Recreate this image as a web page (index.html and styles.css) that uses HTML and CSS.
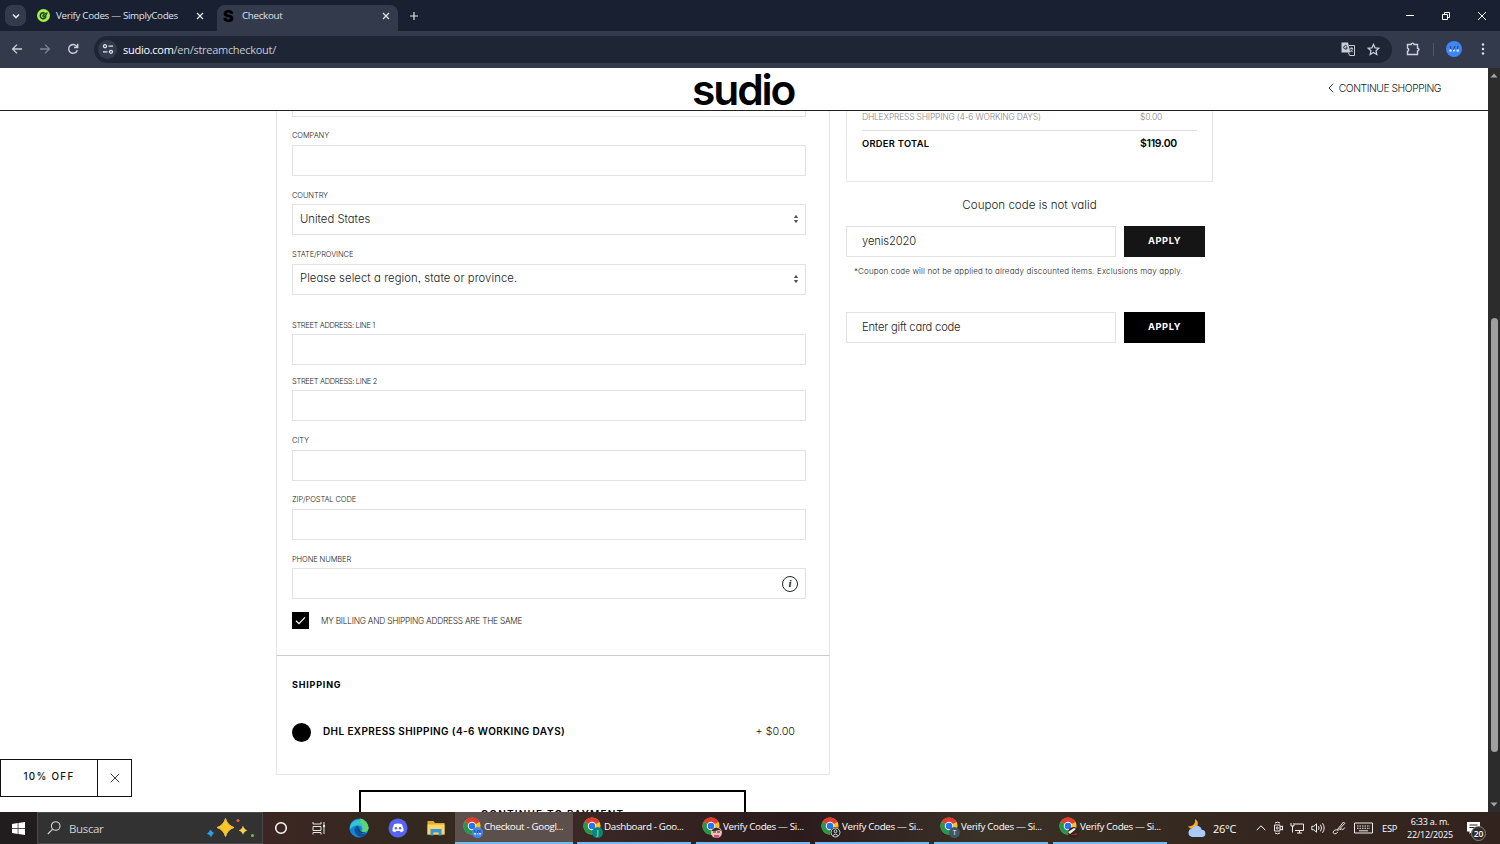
FILE: index.html
```html
<!DOCTYPE html>
<html lang="en">
<head>
<meta charset="UTF-8">
<meta name="viewport" content="width=device-width, initial-scale=1.0">
<title>Checkout</title>
<link rel="stylesheet" href="styles.css">
</head>
<body>

<!-- shared icons -->
<svg class="defs" width="0" height="0">
  <symbol id="x" viewBox="0 0 10 10"><path d="M2 2l6 6M8 2l-6 6" fill="none" stroke="currentColor" stroke-width="1.3"/></symbol>
  <symbol id="chrome" viewBox="0 0 20 20">
    <circle cx="10" cy="10" r="9.5" fill="#fbc116"/>
    <path d="M10 10L1.8 5.2A9.5 9.5 0 0 1 18.2 5.2z" fill="#e33b2e"/>
    <path d="M10 5.2h8.2L10 10z" fill="#e33b2e"/>
    <path d="M10 10L1.8 5.2A9.5 9.5 0 0 0 10 19.5l4.1-7z" fill="#27964a"/>
    <circle cx="10" cy="10" r="4.7" fill="#fff"/>
    <circle cx="10" cy="10" r="3.7" fill="#2b73e8"/>
  </symbol>
</svg>

<div class="tabs">
  <div class="tab-search"><svg width="10" height="10" viewBox="0 0 10 10"><path d="M2 3.5l3 3 3-3" fill="none" stroke="#dfe3ea" stroke-width="1.6"/></svg></div>
  <div class="tab">
    <svg width="13" height="13" viewBox="0 0 14 14"><circle cx="7" cy="7" r="7" fill="#a5f04c"/><path d="M8 4.300A3.200 3.200 0 1 0 9.800 8" fill="none" stroke="#1b3b22" stroke-width="1.600"/><path d="M5.500 7.500Q7 4 11.500 3.500 11 7.500 7 9.500z" fill="#1b3b22"/><path d="M6.800 8l3-3" stroke="#a5f04c" stroke-width=".7"/></svg>
    <span>Verify Codes — SimplyCodes</span>
    <svg class="close" width="10" height="10"><use href="#x"/></svg>
  </div>
  <div class="tab active">
    <b class="s-icon">S</b>
    <span>Checkout</span>
    <svg class="close" width="10" height="10"><use href="#x"/></svg>
  </div>
  <svg class="new-tab" width="10" height="10" viewBox="0 0 10 10"><path d="M5 1v8M1 5h8" stroke="#dfe3ea" stroke-width="1.2"/></svg>
  <div class="win-buttons">
    <svg width="10" height="10" viewBox="0 0 10 10"><path d="M1 4.500h8" stroke="#fff"/></svg>
    <svg width="10" height="10" viewBox="0 0 10 10" fill="none" stroke="#fff"><path d="M1.5 3.5h5v5h-5zM3.5 3.2V1.5h5v5H6.8"/></svg>
    <svg width="10" height="10" viewBox="0 0 10 10"><path d="M1 1l8 8M9 1L1 9" stroke="#fff"/></svg>
  </div>
</div>

<div class="toolbar">
  <svg width="12" height="12" viewBox="0 0 12 12" fill="none" stroke="#cdd2dc" stroke-width="1.3"><path d="M11 6H1.8M6 1.6L1.6 6 6 10.4"/></svg>
  <svg width="12" height="12" viewBox="0 0 12 12" fill="none" stroke="#7c8493" stroke-width="1.3"><path d="M1 6h9.2M6 1.6L10.4 6 6 10.4"/></svg>
  <svg width="12" height="12" viewBox="0 0 12 12" fill="none" stroke="#cdd2dc" stroke-width="1.4"><path d="M10.3 7.2A4.4 4.4 0 1 1 9.4 3L10.6 4.3M10.7.8v3.7H7"/></svg>
  <div class="address">
    <div class="site-info"><svg width="12" height="12" viewBox="0 0 12 12" fill="none" stroke="#dfe3ea" stroke-width="1.3"><circle cx="3" cy="3.2" r="1.5"/><path d="M6.5 3.2H11M1 8.8h4.5"/><circle cx="9" cy="8.8" r="1.5"/></svg></div>
    <span class="url"><i>sudio.com</i>/en/streamcheckout/</span>
    <svg width="14" height="14" viewBox="0 0 14 14"><path d="M.5.5h6.500l2.300 10H.5z" fill="#c9ced8"/><path d="M8 3.500h5.500v10H8.600L7.300 10.500M8.800 6.300H12M10.500 5.500v1M11.600 6.400c-.3 1.800-1.200 2.800-2.300 3.500M9.300 7.500l2.400 2.700" fill="none" stroke="#c9ced8"/><path d="M6 4.300a1.800 1.800 0 1 0 .3 1.500H4.800" fill="none" stroke="#1e2636"/></svg>
    <svg width="13" height="13" viewBox="0 0 14 14"><path d="M7 1.500l1.700 3.700 4 .4-3 2.700.9 4L7 10.200l-3.600 2.100.9-4-3-2.700 4-.4z" fill="none" stroke="#cdd2dc" stroke-width="1.300"/></svg>
  </div>
  <svg class="ext" width="14" height="14" viewBox="0 0 14 14"><path d="M1.500 2.500h3.700a1.400 1.400 0 0 1 2.800 0h3.500v3.700a1.400 1.400 0 0 1 0 2.800v3.500h-10V9.300a1.600 1.600 0 0 0 0-3.100z" fill="none" stroke="#cdd2dc" stroke-width="1.400"/></svg>
  <div class="sep"></div>
  <svg width="16" height="16" viewBox="0 0 16 16"><circle cx="8" cy="8" r="8" fill="#3f86f5"/><path d="M4 5l1.500 5M7 10l2-5M12 5l-1 5" stroke="#233f78"/><circle cx="4.500" cy="9.500" r="1.300" fill="#dfe6ff"/><circle cx="8" cy="9.500" r="1.100" fill="#dfe6ff"/><circle cx="11.700" cy="9.500" r="1.300" fill="#dfe6ff"/></svg>
  <svg class="dots" width="4" height="14" viewBox="0 0 4 14" fill="#dfe3ea"><circle cx="2" cy="2.500" r="1.200"/><circle cx="2" cy="7" r="1.200"/><circle cx="2" cy="11.500" r="1.200"/></svg>
</div>

<div class="viewport">
  <div class="page">
    <header>
      <div class="logo">sudio</div>
      <a class="continue"><svg width="6" height="10" viewBox="0 0 6 10"><path d="M5.300.7L1 5l4.300 4.300" fill="none" stroke="#222" stroke-width=".9"/></svg><span>CONTINUE SHOPPING</span></a>
    </header>

    <main>
      <div class="left">
        <div class="card address-card">
          <div class="input cut"></div>
          <div class="field"><label>COMPANY</label><div class="input"></div></div>
          <div class="field"><label>COUNTRY</label>
            <div class="input select"><span class="country">United States</span><svg width="6" height="10" viewBox="0 0 6 10" fill="#555"><path d="M3 .8L5.200 4H.8zM3 9.200L.8 6h4.400z"/></svg></div>
          </div>
          <div class="field"><label>STATE/PROVINCE</label>
            <div class="input select"><span class="region">Please select a region, state or province.</span><svg width="6" height="10" viewBox="0 0 6 10" fill="#555"><path d="M3 .8L5.200 4H.8zM3 9.200L.8 6h4.400z"/></svg></div>
          </div>
          <div class="field street"><label>STREET ADDRESS: LINE 1</label><div class="input"></div></div>
          <div class="field street2"><label>STREET ADDRESS: LINE 2</label><div class="input"></div></div>
          <div class="field"><label>CITY</label><div class="input"></div></div>
          <div class="field"><label>ZIP/POSTAL CODE</label><div class="input"></div></div>
          <div class="field"><label>PHONE NUMBER</label><div class="input phone"><div class="info">i</div></div></div>
          <div class="same">
            <div class="check"><svg width="11" height="9" viewBox="0 0 11 9"><path d="M1 4.800l3 2.900L10 1.300" fill="none" stroke="#fff" stroke-width="1.200"/></svg></div>
            <span>MY BILLING AND SHIPPING ADDRESS ARE THE SAME</span>
          </div>
        </div>
        <div class="card shipping-card">
          <h3>SHIPPING</h3>
          <div class="method"><div class="radio"></div><b>DHL EXPRESS SHIPPING (4-6 WORKING DAYS)</b><span>+ $0.00</span></div>
        </div>
        <div class="pay">CONTINUE TO PAYMENT</div>
      </div>

      <div class="right">
        <div class="summary">
          <div class="row ship"><span>DHLEXPRESS SHIPPING (4-6 WORKING DAYS)</span><em>$0.00</em></div>
          <div class="row total"><span>ORDER TOTAL</span><em>$119.00</em></div>
        </div>
        <p class="error">Coupon code is not valid</p>
        <div class="code"><div class="input"><span class="coupon">yenis2020</span></div><div class="apply hover">APPLY</div></div>
        <p class="note">*Coupon code will not be applied to already discounted items. Exclusions may apply.</p>
        <div class="code"><div class="input"><span class="gift">Enter gift card code</span></div><div class="apply">APPLY</div></div>
      </div>
    </main>

    <div class="offer"><span>10% OFF</span><div><svg width="10" height="10" viewBox="0 0 10 10"><path d="M.8.8l8.400 8.400M9.200.8L.8 9.200" stroke="#222" stroke-width=".9"/></svg></div></div>
  </div>
  <div class="scrollbar">
    <svg width="8" height="5" viewBox="0 0 8 5"><path d="M4 .5L7.500 4.500h-7z" fill="#a5a5a5"/></svg>
    <div class="thumb"></div>
    <svg width="8" height="5" viewBox="0 0 8 5"><path d="M4 4.500L7.500.5h-7z" fill="#a5a5a5"/></svg>
  </div>
</div>

<div class="taskbar">
  <div class="start"><svg width="13" height="13" viewBox="0 0 13 13" fill="#fff"><path d="M0 1.900L5.700 1v5.100H0zM6.400.9L13 0v6.100H6.400zM0 6.800h5.700V12L0 11.100zM6.400 6.800H13V13l-6.600-.9z"/></svg></div>
  <div class="search">
    <svg width="14" height="14" viewBox="0 0 14 14" fill="none" stroke="#d5d5d5" stroke-width="1.100"><circle cx="8.700" cy="5" r="4.300"/><path d="M5.700 8.200L.8 13"/></svg>
    <span>Buscar</span>
    <svg width="48" height="20" viewBox="0 0 48 20"><path d="M18.500 .5Q20.500 7.500 27 9.500 20.500 11.500 18.500 18.500 16.500 11.500 10 9.500 16.500 7.500 18.500.5z" fill="#fbc52c" stroke="#fbc52c"/><path d="M36 7.500q1 4 4.500 4.800-3.500.9-4.500 4.700-1-3.800-4.500-4.700 3.500-.8 4.500-4.800z" fill="#fbd04e"/><path d="M3.500 12q.6 2.200 3 3-1.700 1-2.500 3.500-1-2.500-3.500-2.800 2.300-1.200 3-3.700z" fill="#25a2e8" stroke="#25a2e8"/><circle cx="31" cy="2.500" r="1.600" fill="#e8623c"/><circle cx="45.500" cy="17.500" r="1.500" fill="#7dbb42"/></svg>
  </div>
  <div class="quick">
    <svg width="14" height="14" viewBox="0 0 14 14"><circle cx="7" cy="7" r="5.300" fill="none" stroke="#fff" stroke-width="1.500"/></svg>
    <svg width="14" height="14" viewBox="0 0 14 14" fill="none" stroke="#e5e5e5"><path d="M1 1v2h8V1M1 5.500h8v4H1zM1 13.500v-2h8v2M12 1v12"/><path d="M11 5h2" stroke-width="2"/></svg>
    <svg width="20" height="20" viewBox="0 0 20 20"><circle cx="10" cy="10" r="9.500" fill="#1583d2"/><path d="M1 8A9.500 9.500 0 0 1 19.500 10c0 4-5 5-7 3 2-2 .5-5.500-3.500-5.500S2 9.500.8 12z" fill="#31c4d4"/><path d="M11 .6A9.500 9.500 0 0 1 19.500 10c0 4-5 5-7 3 2-2 2-6-1-8z" fill="#60d46c"/><path d="M9 7.500C3 9 5 19 13.500 18.800c2-.8 3.500-2 4.500-3.800-4 2-8.500 0-8-4.500z" fill="#0d509e"/><path d="M10.500 9.500c-1 2.500 1.500 5.500 6 5.200-2.500.8-5 .3-6.200-1.200-1-1.300-.8-3 .2-4z" fill="#33291f"/></svg>
    <svg width="20" height="20" viewBox="0 0 20 20"><circle cx="10" cy="10" r="9.500" fill="#5865f2"/><path d="M6.300 6q3.700-1.200 7.400 0 2 3.500 1.900 7-1.300 1-2.800 1.300l-.8-1.200H8l-.8 1.200Q5.700 14 4.400 13q-.1-3.500 1.900-7z" fill="#fff"/><circle cx="7.900" cy="10.200" r="1.200" fill="#5865f2"/><circle cx="12.100" cy="10.200" r="1.200" fill="#5865f2"/></svg>
    <svg width="18" height="16" viewBox="0 0 18 16"><path d="M.5 1h6l1.500 2h9.500v11.500H.5z" fill="#e7a92b"/><path d="M.5 4.500h17v10H.5z" fill="#fbd768"/><path d="M3.500 15.500V9h11v6.500h-2.800v-3H6.300v3z" fill="#3b93d8"/></svg>
  </div>
  <div class="apps">
    <div class="app current"><div class="icon"><svg width="18" height="18"><use href="#chrome"/></svg><i class="blue"><svg width="11" height="11" viewBox="0 0 11 11"><path d="M2.500 3l1 4M5 7l1.200-4M8 3v4" stroke="#233f78"/><circle cx="3" cy="6.700" r="1" fill="#dfe6ff"/><circle cx="5.500" cy="6.700" r=".8" fill="#dfe6ff"/><circle cx="8" cy="6.700" r="1" fill="#dfe6ff"/></svg></i></div><span>Checkout - Googl...</span></div>
    <div class="app"><div class="icon"><svg width="18" height="18"><use href="#chrome"/></svg><i class="teal">J</i></div><span>Dashboard - Goo...</span></div>
    <div class="app"><div class="icon"><svg width="18" height="18"><use href="#chrome"/></svg><i class="face"><svg width="11" height="11" viewBox="0 0 11 11"><path d="M0 4Q5-3 11 4L8 3 4 4z" fill="#3b2926"/><path d="M2 5h3M6 5h3" stroke="#333"/><path d="M3 8h5v3H3z" fill="#d24e7c"/></svg></i></div><span>Verify Codes — Si...</span></div>
    <div class="app"><div class="icon"><svg width="18" height="18"><use href="#chrome"/></svg><i class="person"><svg width="11" height="11" viewBox="0 0 11 11" fill="none" stroke="#ddd"><circle cx="5.500" cy="5.500" r="4.500"/><circle cx="5.500" cy="4.300" r="1.400"/><path d="M3 8.500q2.500-3 5 0"/></svg></i></div><span>Verify Codes — Si...</span></div>
    <div class="app"><div class="icon"><svg width="18" height="18"><use href="#chrome"/></svg><i class="slate">T</i></div><span>Verify Codes — Si...</span></div>
    <div class="app"><div class="icon"><svg width="18" height="18"><use href="#chrome"/></svg><i class="dark"><svg width="11" height="11" viewBox="0 0 11 11"><path d="M0 5l6-4 2 1-6 5z" fill="#eee"/><path d="M2 8l7-2v2z" fill="#a5301c"/></svg></i></div><span>Verify Codes — Si...</span></div>
  </div>
  <div class="tray">
    <svg class="weather" width="20" height="20" viewBox="0 0 20 20"><path d="M8 1c4 2 4 8-1 10-3 .5-5-1-6-3 4 1 8-2 7-7z" fill="#f5ab2e"/><path d="M5 19a4.300 4.300 0 0 1 .3-8.500 5 5 0 0 1 9.300 1.200A3.700 3.700 0 0 1 15.500 19z" fill="#a9cbfa"/></svg>
    <span class="temp">26°C</span>
    <svg class="up" width="10" height="8" viewBox="0 0 10 8"><path d="M.7 6.200L5 1.800l4.300 4.400" fill="none" stroke="#fff"/></svg>
    <svg width="10" height="14" viewBox="0 0 10 14" fill="none" stroke="#eee"><path d="M2 2Q4.500.3 7 2M2 12q2.500 1.700 5 0M1.500 4h5.500v6H1.500zM7 6l2.500-1v4L7 8"/><circle cx="4.300" cy="7" r="1"/></svg>
    <svg width="14" height="12" viewBox="0 0 14 12" fill="none" stroke="#eee"><path d="M4.500 2h9v6.500H5M7 11h5M9.500 8.500V11M1 1v3h3V1M2.500 4v6.500"/></svg>
    <svg width="14" height="12" viewBox="0 0 14 12" fill="none" stroke="#eee"><path d="M.8 4.300h2L5.500 1.800v8.400L2.800 7.700h-2zM7.500 4.200q1.200 1.800 0 3.600M9.500 2.700q2.200 3.300 0 6.600M11.500 1.200q3.300 4.800 0 9.600"/></svg>
    <svg class="pen" width="14" height="14" viewBox="0 0 14 14" fill="none" stroke="#eee"><path d="M5.500 8.500L11.500 1l1.300 1.300-6.500 7zM6 9.200C4 8 1 9.500 1.200 11.500s4 1.500 4.300-.6M8 9q1.500-2 2.200-.7t2.600-1.800"/></svg>
    <svg width="19" height="12" viewBox="0 0 19 12" fill="none" stroke="#eee"><path d="M.5 1h18v10H.5z"/><path d="M3 4h13M3 6.300h13" stroke-dasharray="1.500 1"/><path d="M5 8.800h9"/></svg>
    <span class="lang">ESP</span>
    <div class="clock"><span>6:33 a. m.</span><span>22/12/2025</span></div>
    <div class="notif"><svg width="13" height="12" viewBox="0 0 13 12"><path d="M0 0h13v9.500H5L2.500 12V9.500H0z" fill="#fff"/><path d="M2.500 3h8M2.500 5.500h8" stroke="#33261f"/></svg><i>20</i></div>
  </div>
</div>

</body>
</html>
```
FILE: styles.css
```css
* {
  box-sizing: border-box;
}

body {
  margin: 0;
  width: 1500px;
  height: 844px;
  overflow: hidden;
  display: flex;
  flex-direction: column;
  background: #fff;
  font-family: "Open Sans", sans-serif;
}

svg {
  flex: none;
  display: block;
}

i, em {
  font-style: normal;
}

.defs {
  position: absolute;
}

/* browser tabs */
.tabs {
  height: 31px;
  flex: none;
  display: flex;
  background: #182032;
  color: #dfe3ea;
  font-size: 9.8px;
  white-space: nowrap;
}

.tab-search {
  width: 21px;
  height: 21px;
  margin: 5px 0 0 5px;
  border-radius: 7px;
  background: #333a4b;
  display: flex;
  align-items: center;
  justify-content: center;
}

.tab {
  width: 191px;
  height: 31px;
  padding: 0 12px 0 11px;
  display: flex;
  align-items: center;
  gap: 6px;
  letter-spacing: -0.32px;
}

.tab .close {
  margin-left: auto;
}

.tab.active {
  width: 181px;
  height: 26px;
  margin-top: 5px;
  padding: 0 7px 5px 6px;
  background: #333a4b;
  border-radius: 8px 8px 0 0;
}

.s-icon {
  width: 13px;
  color: #000;
  font: 900 16px "Inter", sans-serif;
}

.new-tab {
  margin: 11px 0 0 11px;
}

.win-buttons {
  margin: 11px 13px 0 auto;
  display: flex;
  gap: 26px;
}

/* address bar */
.toolbar {
  height: 37px;
  flex: none;
  display: flex;
  align-items: center;
  gap: 16px;
  padding: 0 15px 1px 11px;
  background: #333a4b;
}

.address {
  width: 1298px;
  height: 27px;
  margin-left: -1px;
  padding: 0 12px 0 4px;
  border-radius: 14px;
  background: #1e2636;
  display: flex;
  align-items: center;
  gap: 12px;
}

.site-info {
  width: 19px;
  height: 19px;
  border-radius: 50%;
  background: #333a4b;
  display: flex;
  align-items: center;
  justify-content: center;
}

.url {
  flex: 1;
  margin-left: -6px;
  color: #c4cad4;
  font-size: 11px;
  letter-spacing: -0.28px;
}

.url i {
  color: #fff;
}

.ext {
  margin-left: -2px;
}

.sep {
  width: 1px;
  height: 13px;
  margin: 0 -4px 0 -3px;
  background: #505869;
}

.dots {
  margin-left: auto;
}

/* page */
.viewport {
  height: 744px;
  flex: none;
  display: flex;
  overflow: hidden;
}

.page {
  width: 1488px;
  height: 744px;
  position: relative;
  overflow: hidden;
  color: #222;
  font-family: "Inter", sans-serif;
  font-feature-settings: "cv11", "ss03";
  font-weight: 300;
  white-space: nowrap;
}

header {
  height: 43px;
  border-bottom: 1px solid #222;
  display: grid;
  grid-template-columns: 1fr 104px 1fr;
  align-items: center;
}

.logo {
  grid-column: 2;
  height: 42px;
  color: #000;
  font-size: 42.5px;
  font-weight: 600;
  line-height: 43px;
  letter-spacing: -2.1px;
}

.continue {
  justify-self: end;
  margin: -2px 47px 0 0;
  display: flex;
  align-items: center;
  gap: 5px;
  font-size: 10.3px;
  letter-spacing: -0.45px;
}

main {
  display: flex;
  gap: 16px;
  padding-left: 276px;
}

.left {
  width: 554px;
}

.card {
  border: 1px solid #e6e6e6;
  padding: 0 15px;
}

.address-card {
  height: 545px;
  border-top: 0;
  border-bottom-color: #ccc;
}

.input {
  width: 514px;
  height: 31px;
  border: 1px solid #e2e2e2;
  background: #fff;
  display: flex;
  align-items: center;
}

.input.cut {
  height: 5.5px;
  border-top: 0;
}

.field label {
  display: block;
  margin: 13.9px 0 2.5px;
  height: 12px;
  line-height: 12px;
  font-size: 7.5px;
  letter-spacing: -0.1px;
}

.field.street label {
  margin-top: 25px;
  letter-spacing: -0.33px;
}

.field.street2 label {
  margin-top: 10.5px;
  letter-spacing: -0.31px;
}

.select {
  justify-content: space-between;
  padding: 0 6px 2px 7px;
  font-size: 11.3px;
}

.select svg {
  margin-top: 1px;
}

.region {
  letter-spacing: 0.07px;
}

.phone {
  justify-content: flex-end;
  padding-right: 7px;
}

.info {
  width: 16px;
  height: 16px;
  border: 1.3px solid #222;
  border-radius: 50%;
  text-align: center;
  font: italic bold 11px/13px "Liberation Serif", serif;
}

.same {
  display: flex;
  align-items: center;
  gap: 12px;
  margin-top: 12.5px;
  font-size: 8.3px;
  letter-spacing: -0.22px;
}

.same span {
  margin-top: 2px;
}

.check {
  width: 17px;
  height: 17px;
  background: #000;
  display: flex;
  align-items: center;
  justify-content: center;
}

.shipping-card {
  display: flow-root;
  height: 119px;
  border-top: 0;
}

.shipping-card h3 {
  margin: 22px 0 32px;
  color: #000;
  font-size: 9px;
  line-height: 13px;
  letter-spacing: 0.8px;
}

.method {
  display: flex;
  align-items: center;
}

.radio {
  width: 19px;
  height: 19px;
  margin-right: 12px;
  border-radius: 50%;
  background: #000;
}

.method b {
  margin-top: -4px;
  color: #000;
  font-size: 10px;
  font-weight: 600;
  letter-spacing: 0.39px;
}

.method span {
  margin: -3px 19px 0 auto;
  font-size: 10.8px;
}

.pay {
  width: 387px;
  height: 50px;
  margin: 15px 0 0 83px;
  border: 2px solid #000;
  color: #000;
  text-align: center;
  font-size: 10px;
  font-weight: 600;
  line-height: 45px;
  letter-spacing: 1.2px;
}

/* order summary */
.right {
  width: 367px;
}

.summary {
  height: 71px;
  padding: 0 15px;
  border: 1px solid #e6e6e6;
  border-top: 0;
}

.row {
  display: flex;
  justify-content: space-between;
}

.row em {
  width: 57px;
}

.row.ship {
  height: 20px;
  padding-top: 1px;
  border-bottom: 1px solid #ddd;
  color: #888;
  font-size: 8.5px;
  line-height: 10px;
  letter-spacing: -0.2px;
}

.row.total {
  padding-top: 6px;
  color: #000;
  font-size: 9.3px;
  font-weight: 600;
  line-height: 14px;
  letter-spacing: 0.3px;
}

.row.total em {
  font-size: 10.5px;
  letter-spacing: -0.3px;
}

.error {
  margin: 15px 0 12px;
  text-align: center;
  font-size: 11.6px;
  line-height: 17px;
}

.code {
  display: flex;
  gap: 8px;
}

.code .input {
  width: 270px;
  padding: 0 0 1px 15px;
  font-size: 11.2px;
}

.coupon {
  letter-spacing: -0.1px;
}

.gift {
  letter-spacing: -0.2px;
}

.apply {
  width: 81px;
  height: 31px;
  background: #000;
  color: #fff;
  text-align: center;
  font-size: 9.3px;
  font-weight: 700;
  line-height: 30px;
  letter-spacing: 0.6px;
}

.apply.hover {
  background: #151515;
}

.note {
  margin: 8px 0 35px 8px;
  font-size: 8px;
  line-height: 12px;
  letter-spacing: 0.14px;
}

/* floating discount box */
.offer {
  position: absolute;
  left: 0;
  top: 691px;
  width: 132px;
  height: 38px;
  border: 1px solid #111;
  background: #fff;
  display: flex;
  color: #111;
  font-size: 9.8px;
  font-weight: 500;
  letter-spacing: 1.35px;
  line-height: 33px;
}

.offer span {
  width: 96px;
  text-align: center;
}

.offer div {
  flex: 1;
  border-left: 1px solid #111;
  display: flex;
  align-items: center;
  justify-content: center;
}

.scrollbar {
  width: 12px;
  background: #2c2c2c;
  display: flex;
  flex-direction: column;
  align-items: center;
  padding: 5px 0;
}

.thumb {
  width: 7px;
  height: 434px;
  margin: 240px 0 auto;
  border-radius: 4px;
  background: #9f9f9f;
}

/* windows taskbar */
.taskbar {
  height: 32px;
  flex: none;
  display: flex;
  background: linear-gradient(90deg, #33231f 0, #3c2623 270px, #33291f 400px, #3a2924 570px, #2c1b1d 800px, #3a3127 980px, #35281f 1200px, #33231f 1500px);
  color: #fff;
  font-size: 9.8px;
  white-space: nowrap;
}

.start {
  width: 37px;
  background: #211d1f;
  display: flex;
  align-items: center;
  justify-content: center;
}

.search {
  width: 226px;
  border: 1px solid #4a4a4a;
  background: #323232;
  display: flex;
  align-items: center;
  padding: 0 7px 0 9px;
  gap: 8px;
  color: #d0d0d0;
  font-size: 11.5px;
  letter-spacing: -0.35px;
}

.search svg:last-child {
  margin-left: auto;
}

.quick {
  width: 192px;
  padding: 0 11px;
  display: flex;
  align-items: center;
  gap: 20px;
}

.quick svg:nth-child(2) {
  margin: 0 3px 0 4px;
}

.quick svg:nth-child(4) {
  margin: 0 -1px;
}

.apps {
  display: flex;
  gap: 5px;
}

.app {
  width: 114px;
  padding: 0 0 1px 6px;
  border-bottom: 2px solid #76b9ed;
  display: flex;
  align-items: center;
  gap: 2px;
  letter-spacing: -0.33px;
}

.app.current {
  width: 118px;
  margin-right: -1px;
  padding-left: 8px;
  background: #5c4f4c;
}

.icon {
  width: 19px;
  height: 20px;
  position: relative;
}

.icon i {
  position: absolute;
  right: -1px;
  bottom: -1px;
  width: 11px;
  height: 11px;
  border-radius: 50%;
  overflow: hidden;
  text-align: center;
  font-size: 6.5px;
  line-height: 11px;
}

.blue { background: #3f86f5; }
.teal { background: #00897b; }
.face { background: #e8c2b4; }
.person { background: #222; }
.slate { background: #3f5767; }
.dark { background: #35211c; }

.tray {
  flex: 1;
  display: flex;
  align-items: center;
  gap: 7px;
  padding-left: 20px;
}

.temp {
  margin-left: -1px;
  font-size: 11px;
  letter-spacing: -0.3px;
}

.up {
  margin: 0 0 0 13px;
}

.pen {
  margin: 0 1px 0 0;
}

.lang {
  margin: 0 3px 0 2px;
  font-size: 9.3px;
  letter-spacing: -0.3px;
}

.clock {
  width: 46px;
  display: flex;
  flex-direction: column;
  align-items: center;
  font-size: 9px;
  line-height: 13.5px;
  letter-spacing: -0.2px;
}

.notif {
  position: relative;
  margin-left: 7px;
}

.notif i {
  position: absolute;
  left: 4px;
  top: 4px;
  width: 15px;
  height: 15px;
  border: 1px solid #888;
  border-radius: 50%;
  background: #2e2a28;
  text-align: center;
  font-size: 8.5px;
  font-weight: 600;
  line-height: 13px;
}
```
